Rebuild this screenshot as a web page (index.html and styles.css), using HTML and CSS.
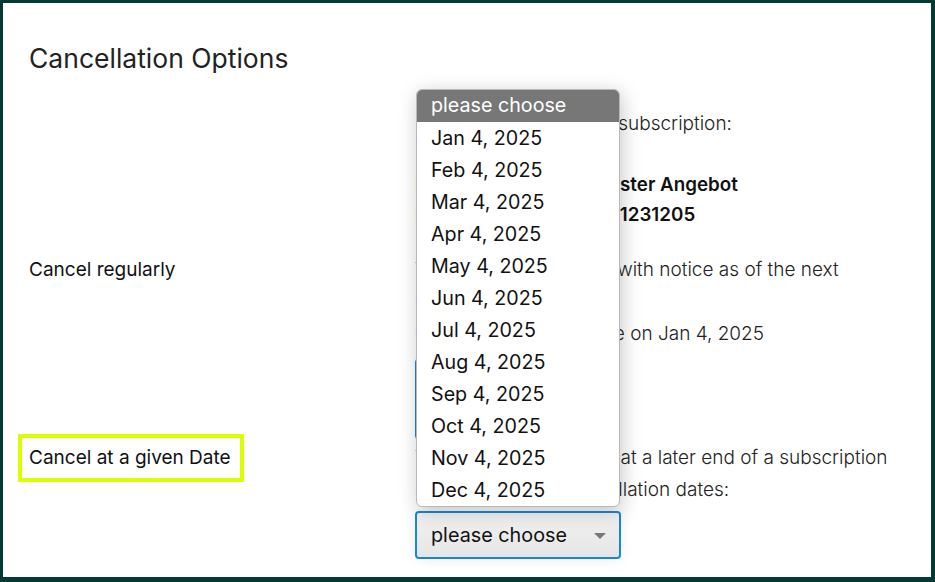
FILE: index.html
```html
<!DOCTYPE html>
<html lang="en">
<head>
    <meta charset="UTF-8">
    <meta name="viewport" content="width=device-width, initial-scale=1.0">
    <title>Cancellation Options</title>
    <link rel="stylesheet" href="styles.css">
</head>
<body>
    <div class="frame">
        <h1>Cancellation Options</h1>

        <div class="row row-info">
            <div class="label"></div>
            <div class="content">
                <p>See the details of your subscription:</p>
                <div class="facts">
                    <div class="fact"><span class="key">Product:</span><span>Tester Angebot</span></div>
                    <div class="fact"><span class="key">Number:</span><span>A-1231205</span></div>
                </div>
            </div>
        </div>

        <div class="row row-regular">
            <div class="label">Cancel regularly</div>
            <div class="content">
                <p>You may quit regularly with notice as of the next<br>billing period.<br>Cancelation takes place on Jan 4, 2025</p>
                <button class="btn-cancel">Cancel now</button>
            </div>
        </div>

        <div class="row row-date">
            <div class="label"><span class="highlight">Cancel at a given Date</span></div>
            <div class="content">
                <p>You could even cancel at a later end of a subscription<br>period. View the cancellation dates:</p>
                <div class="select-wrap">
                    <div class="select">
                        <span>please choose</span>
                        <span class="caret"></span>
                    </div>
                    <ul class="dropdown">
                        <li class="selected">please choose</li>
                        <li>Jan 4, 2025</li>
                        <li>Feb 4, 2025</li>
                        <li>Mar 4, 2025</li>
                        <li>Apr 4, 2025</li>
                        <li>May 4, 2025</li>
                        <li>Jun 4, 2025</li>
                        <li>Jul 4, 2025</li>
                        <li>Aug 4, 2025</li>
                        <li>Sep 4, 2025</li>
                        <li>Oct 4, 2025</li>
                        <li>Nov 4, 2025</li>
                        <li>Dec 4, 2025</li>
                    </ul>
                </div>
            </div>
        </div>
    </div>
</body>
</html>
```

FILE: styles.css
```css
html, body {
    margin: 0;
    padding: 0;
}

body {
    font-family: Inter, "Noto Sans", sans-serif;
    color: #1f1f1f;
    background: #ffffff;
}

.frame {
    box-sizing: border-box;
    width: 935px;
    height: 582px;
    border-style: solid;
    border-color: #033a33;
    border-width: 3px 4px 5px 3px;
    padding: 40px 30px 0 26px;
    overflow: hidden;
}

h1 {
    margin: 0;
    font-size: 26.5px;
    font-weight: 400;
    line-height: 30px;
    color: #222;
}

.row {
    display: grid;
    grid-template-columns: 386px 1fr;
    align-items: start;
}

.label {
    font-size: 19px;
    line-height: 32px;
    color: #111;
}

.content p {
    margin: 0;
    font-size: 19px;
    font-weight: 300;
    line-height: 32px;
    color: #222;
    white-space: nowrap;
}

/* subscription info */
.row-info {
    margin-top: 36px;
}

.row-info p {
    line-height: 30px;
}

.facts {
    margin-top: 31px;
    font-size: 18.8px;
    font-weight: 600;
    line-height: 30px;
    color: #111;
}

.fact {
    display: flex;
}

.fact .key {
    width: 183px;
}

/* regular cancellation */
.row-regular {
    margin-top: 24px;
}

.btn-cancel {
    display: block;
    margin-top: 8px;
    width: 180px;
    height: 82px;
    border: 1px solid #1a84d6;
    border-radius: 4px;
    background: #f3f3f3;
    font-family: inherit;
    font-size: 18px;
}

/* cancel at a given date */
.row-date {
    margin-top: 2px;
}

.highlight {
    display: inline-block;
    margin: -10px 0 0 -11px;
    padding: 4px 9px 4px 7px;
    border: 4px solid #dcff00;
}

.select-wrap {
    position: relative;
    margin-top: 5px;
}

.select {
    box-sizing: border-box;
    width: 206px;
    height: 48px;
    display: flex;
    align-items: center;
    justify-content: space-between;
    padding: 0 13px 0 14px;
    border: 2px solid #1a86d8;
    border-radius: 4px;
    background: linear-gradient(#f1f1f1, #e6e6e6);
    box-shadow: 0 0 14px rgba(0, 0, 0, 0.08);
    font-size: 19.8px;
    color: #111;
}

.caret {
    width: 0;
    height: 0;
    border-left: 6px solid transparent;
    border-right: 6px solid transparent;
    border-top: 6px solid #777;
    margin-top: 2px;
}

.dropdown {
    position: absolute;
    left: 1px;
    top: -422px;
    box-sizing: border-box;
    width: 204px;
    margin: 0;
    padding: 0;
    list-style: none;
    background: #fff;
    border: 1px solid #b8b8b8;
    border-radius: 6px;
    overflow: hidden;
    box-shadow: 2px 4px 20px rgba(0, 0, 0, 0.22);
}

.dropdown li {
    height: 32px;
    line-height: 32px;
    padding-left: 14px;
    font-size: 19.7px;
    color: #111;
}

.dropdown li.selected {
    background: #777;
    color: #fff;
    line-height: 30px;
}
```
